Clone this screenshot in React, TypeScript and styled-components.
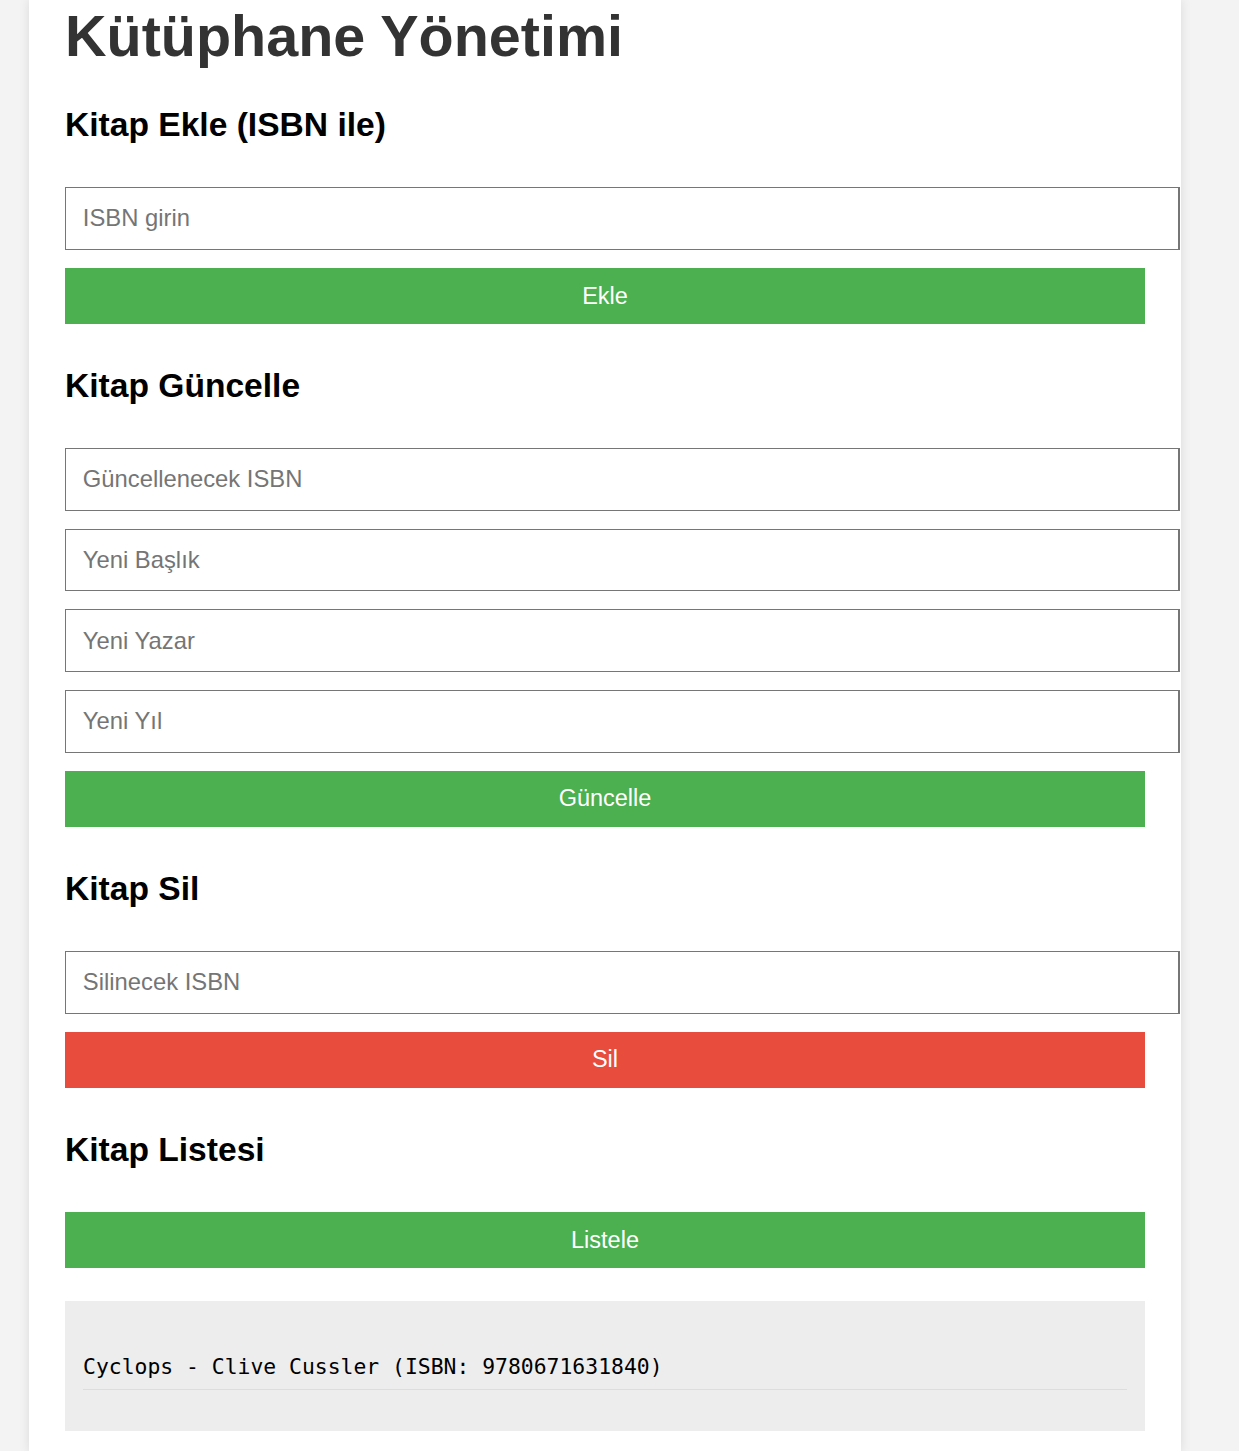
import React from "react";
import styled, { createGlobalStyle } from "styled-components";

const GlobalStyle = createGlobalStyle`
  html, body {
    margin: 0;
    padding: 0;
    background: #f3f3f3;
    font-family: "Liberation Sans", Arial, sans-serif;
    overflow: hidden;
  }
`;

const Page = styled.div`
  padding-left: 29px;
  min-height: 1451px;
  box-sizing: border-box;
  display: flex;
`;

const Container = styled.main`
  width: 1152px;
  box-sizing: border-box;
  background: #ffffff;
  padding: 4px 36px 21px;
  box-shadow: 0 0 10px rgba(0, 0, 0, 0.1);
  display: flex;
  flex-direction: column;
`;

const Title = styled.h1`
  margin: 0;
  font-size: 57.5px;
  line-height: 64px;
  font-weight: 700;
  color: #333333;
`;

const Sections = styled.div`
  margin-top: 38px;
  display: flex;
  flex-direction: column;
  gap: 42.5px;
`;

const Section = styled.section`
  display: flex;
  flex-direction: column;
`;

const Heading = styled.h2`
  margin: 0 0 43px;
  font-size: 33.6px;
  line-height: 38px;
  font-weight: 700;
  color: #000000;
`;

const Form = styled.div`
  display: flex;
  flex-direction: column;
  gap: 18px;
`;

const Input = styled.input`
  box-sizing: border-box;
  width: calc(100% + 35px);
  height: 62.7px;
  padding: 0 16.8px;
  border: 1px solid #767676;
  border-right-width: 2.5px;
  border-radius: 0;
  background: #ffffff;
  font-family: "Liberation Sans", Arial, sans-serif;
  font-size: 23.8px;
  color: #000;
  outline: none;

  &::placeholder {
    color: #757575;
  }
`;

const Button = styled.button<{ $variant?: "primary" | "danger" }>`
  box-sizing: border-box;
  width: 100%;
  height: 56.7px;
  border: none;
  border-radius: 0;
  padding: 0;
  background: ${(p) => (p.$variant === "danger" ? "#e74c3c" : "#4caf50")};
  color: #ffffff;
  font-family: "Liberation Sans", Arial, sans-serif;
  font-size: 23.5px;
  cursor: pointer;
`;

const ListBox = styled.div`
  margin-top: 33px;
  background: #ededed;
  padding: 18px;
`;

const BookList = styled.ul`
  list-style: none;
  margin: 25px 0 23px;
  padding: 0;
`;

const BookItem = styled.li`
  padding: 10px 0;
  border-bottom: 1px solid #dddddd;
  font-family: "DejaVu Sans Mono", "Liberation Mono", monospace;
  font-size: 21.4px;
  color: #000000;
`;

export default function App() {
  return (
    <>
      <GlobalStyle />
      <Page>
        <Container>
          <Title>Kütüphane Yönetimi</Title>
          <Sections>
            <Section>
              <Heading>Kitap Ekle (ISBN ile)</Heading>
              <Form>
                <Input placeholder="ISBN girin" />
                <Button>Ekle</Button>
              </Form>
            </Section>
            <Section>
              <Heading>Kitap Güncelle</Heading>
              <Form>
                <Input placeholder="Güncellenecek ISBN" />
                <Input placeholder="Yeni Başlık" />
                <Input placeholder="Yeni Yazar" />
                <Input placeholder="Yeni Yıl" />
                <Button>Güncelle</Button>
              </Form>
            </Section>
            <Section>
              <Heading>Kitap Sil</Heading>
              <Form>
                <Input placeholder="Silinecek ISBN" />
                <Button $variant="danger">Sil</Button>
              </Form>
            </Section>
            <Section>
              <Heading>Kitap Listesi</Heading>
              <Form>
                <Button>Listele</Button>
              </Form>
            </Section>
          </Sections>
          <ListBox>
            <BookList>
              <BookItem>Cyclops - Clive Cussler (ISBN: 9780671631840)</BookItem>
            </BookList>
          </ListBox>
        </Container>
      </Page>
    </>
  );
}
